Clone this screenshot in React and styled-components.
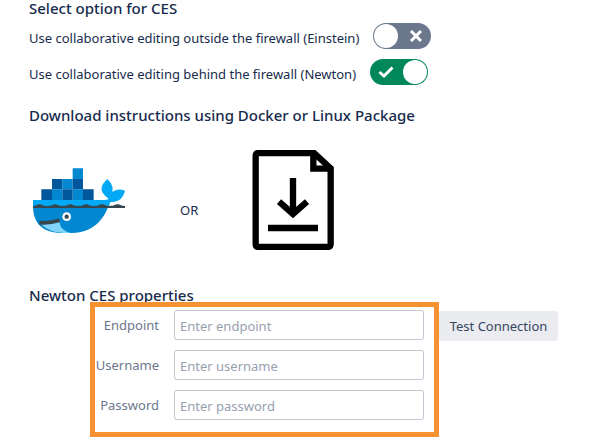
import React, { useState } from "react";
import styled, { createGlobalStyle } from "styled-components";

const GlobalStyle = createGlobalStyle`
  * { box-sizing: border-box; }
  body {
    margin: 0;
    background: #ffffff;
    color: #172b4d;
    font-family: "Noto Sans", "Open Sans", sans-serif;
    font-size: 13px;
    line-height: 20px;
  }
`;

const Page = styled.main`
  padding: 0 28px 8px 29px;
`;

const Heading = styled.h2`
  margin: 0;
  font-family: "Noto Sans", "Open Sans", sans-serif;
  font-size: 15px;
  font-weight: 500;
  line-height: 16px;
`;

const OptionList = styled.div`
  display: grid;
  gap: 10px;
  padding: 7px 0 22px;
`;

const OptionRow = styled.label`
  display: flex;
  align-items: center;
  gap: 14px;
  height: 26px;
`;

const OptionText = styled.span`
  padding-top: 4px;
`;

const Toggle = styled.span`
  position: relative;
  display: flex;
  align-items: center;
  justify-content: ${(p) => (p.$on ? "flex-start" : "flex-end")};
  width: 58px;
  height: 26px;
  padding: 0 8px;
  border-radius: 13px;
  background: ${(p) => (p.$on ? "#00875a" : "#6b778c")};

  &::after {
    content: "";
    position: absolute;
    top: 1px;
    ${(p) => (p.$on ? "right" : "left")}: 1px;
    width: 24px;
    height: 24px;
    border-radius: 50%;
    background: #ffffff;
  }
`;

const ToggleInput = styled.input`
  position: absolute;
  inset: 0;
  width: 100%;
  height: 100%;
  margin: 0;
  opacity: 0;
  cursor: pointer;
  z-index: 1;
`;

const Downloads = styled.div`
  display: flex;
  align-items: center;
  gap: 54px;
  padding: 27px 0 37px 3px;
`;

const Separator = styled.span`
  padding-top: 20px;
`;

const DownloadLink = styled.a`
  display: block;
  color: #000000;

  svg { display: block; }
`;

const Connection = styled.form`
  display: flex;
  align-items: flex-start;
  margin-left: 61px;
`;

const FieldFrame = styled.div`
  position: relative;
  display: grid;
  gap: 10px;
  flex: 0 1 349px;
  min-width: 0;
  margin-top: -1px;
  padding: 3px 10px 12px 0;
  border: 5px solid #f79232;
`;

const FieldRow = styled.div`
  display: flex;
  align-items: center;
  gap: 15px;
`;

const FieldLabel = styled.label`
  flex: 0 0 64px;
  color: #6b778c;
  text-align: right;
`;

const TextInput = styled.input`
  flex: 1;
  min-width: 0;
  height: 30px;
  padding: 1px 5px 0;
  border: 1px solid #c1c7d0;
  border-radius: 3px;
  background: #ffffff;
  color: #172b4d;
  font: inherit;

  &::placeholder { color: #97a0af; opacity: 1; }
`;

const TestButton = styled.button`
  height: 30px;
  min-width: 119px;
  margin-top: 8px;
  padding: 0 10px;
  border: 0;
  border-radius: 3px;
  background: #ebecf0;
  color: #344563;
  font: inherit;
  white-space: nowrap;
`;

function CheckIcon() {
  return (
    <svg width="16" height="14" viewBox="0 0 16 14" fill="none" stroke="#fff" strokeWidth="3" aria-hidden="true">
      <path d="M1.5 7 6 11 14.5 2.5" />
    </svg>
  );
}

function CrossIcon() {
  return (
    <svg width="14" height="14" viewBox="0 0 14 14" fill="none" stroke="#fff" strokeWidth="3" aria-hidden="true">
      <path d="m2 2 10 10M12 2 2 12" />
    </svg>
  );
}

function DockerIcon() {
  return (
    <svg width="94" height="67" viewBox="36 51 282 201" aria-hidden="true">
      <path fill="#0288d1" d="M39 168h226c-12 38-46 81-109 81H126C70 249 39 222 39 168Z" />
      <path fill="#81d4fa" d="M60 220c22 2 40 1 59-4 0 15 12 28 33 33-36 2-67-4-92-29Z" />
      <path fill="#03a9f4" d="M39 150h207c10 0 17-1 20-4-28-20-28-36-4-59 14 14 18 25 15 39 11-9 24-10 38-4-5 22-18 34-44 34l-5 16H39Z" />
      <path fill="#0288d1" d="M158 55h31v32h-31zM127 87h31v31h-31zM96 118h31v32H96zM158 118h31v32h-31z" />
      <path fill="#01579b" d="M96 87h31v31H96zM158 87h31v31h-31zM64 118h32v32H64zM127 118h31v32h-31zM189 118h32v32h-32z" />
      <path fill="#37474f" d="M39 168c10 0 14-5 20-5s9 5 22 5h2c13 0 16-5 22-5s9 5 23 5 17-5 23-5 10 5 24 5 17-5 23-5 10 5 24 5 17-5 24-5 10 5 23 5 17-5 24-5 10 5 22 5v6H39Z" />
      <path fill="none" stroke="#37474f" strokeWidth="11" d="M58 218c24 2 42-1 61-7" />
      <circle cx="140" cy="200" r="13" fill="#fff" />
      <circle cx="140" cy="200" r="6.5" fill="#37474f" />
    </svg>
  );
}

function FileDownloadIcon() {
  return (
    <svg width="82" height="100" viewBox="36 30 246 300" fill="none" stroke="currentColor" strokeWidth="19" aria-hidden="true">
      <path d="M47 49Q47 39 57 39H222L272 85V311Q272 321 262 321H57Q47 321 47 311Z" />
      <path d="M220 40V86H272" />
      <path d="M159 114V222M117 185 159 222 201 185M84 264H234" />
    </svg>
  );
}

function Option({ text, initial }) {
  const [on, setOn] = useState(initial);
  return (
    <OptionRow>
      <OptionText>{text}</OptionText>
      <Toggle $on={on}>
        <ToggleInput type="checkbox" role="switch" checked={on} onChange={(e) => setOn(e.target.checked)} />
        {on ? <CheckIcon /> : <CrossIcon />}
      </Toggle>
    </OptionRow>
  );
}

const fields = [
  { id: "endpoint", label: "Endpoint", type: "text" },
  { id: "username", label: "Username", type: "text" },
  { id: "password", label: "Password", type: "password" },
];

export default function App() {
  return (
    <>
      <GlobalStyle />
      <Page>
        <Heading>Select option for CES</Heading>
        <OptionList>
          <Option text="Use collaborative editing outside the firewall (Einstein)" initial={false} />
          <Option text="Use collaborative editing behind the firewall (Newton)" initial />
        </OptionList>
        <Heading>Download instructions using Docker or Linux Package</Heading>
        <Downloads>
          <DownloadLink href="#docker" aria-label="Docker instructions"><DockerIcon /></DownloadLink>
          <Separator>OR</Separator>
          <DownloadLink href="#linux" aria-label="Linux package instructions"><FileDownloadIcon /></DownloadLink>
        </Downloads>
        <Heading>Newton CES properties</Heading>
        <Connection onSubmit={(e) => e.preventDefault()}>
          <FieldFrame>
            {fields.map(({ id, label, type }) => (
              <FieldRow key={id}>
                <FieldLabel htmlFor={id}>{label}</FieldLabel>
                <TextInput id={id} type={type} placeholder={`Enter ${id}`} />
              </FieldRow>
            ))}
          </FieldFrame>
          <TestButton type="submit">Test Connection</TestButton>
        </Connection>
      </Page>
    </>
  );
}
